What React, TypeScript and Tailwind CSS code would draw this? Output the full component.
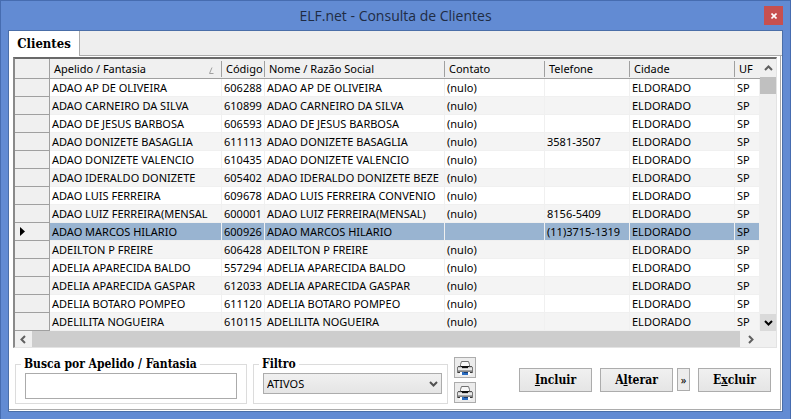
import React from 'react';

type Cliente = {
  apelido: string;
  codigo: string;
  nome: string;
  contato: string;
  telefone: string;
};

const clientes: Cliente[] = [
  { apelido: 'ADAO AP DE OLIVEIRA', codigo: '606288', nome: 'ADAO AP DE OLIVEIRA', contato: '(nulo)', telefone: '' },
  { apelido: 'ADAO CARNEIRO DA SILVA', codigo: '610899', nome: 'ADAO CARNEIRO DA SILVA', contato: '(nulo)', telefone: '' },
  { apelido: 'ADAO DE JESUS BARBOSA', codigo: '606593', nome: 'ADAO DE JESUS BARBOSA', contato: '(nulo)', telefone: '' },
  { apelido: 'ADAO DONIZETE BASAGLIA', codigo: '611113', nome: 'ADAO DONIZETE BASAGLIA', contato: '(nulo)', telefone: '3581-3507' },
  { apelido: 'ADAO DONIZETE VALENCIO', codigo: '610435', nome: 'ADAO DONIZETE VALENCIO', contato: '(nulo)', telefone: '' },
  { apelido: 'ADAO IDERALDO DONIZETE', codigo: '605402', nome: 'ADAO IDERALDO DONIZETE BEZE', contato: '(nulo)', telefone: '' },
  { apelido: 'ADAO LUIS FERREIRA', codigo: '609678', nome: 'ADAO LUIS FERREIRA CONVENIO', contato: '(nulo)', telefone: '' },
  { apelido: 'ADAO LUIZ FERREIRA(MENSAL', codigo: '600001', nome: 'ADAO LUIZ FERREIRA(MENSAL)', contato: '(nulo)', telefone: '8156-5409' },
  { apelido: 'ADAO MARCOS HILARIO', codigo: '600926', nome: 'ADAO MARCOS HILARIO', contato: '', telefone: '(11)3715-1319' },
  { apelido: 'ADEILTON P FREIRE', codigo: '606428', nome: 'ADEILTON P FREIRE', contato: '(nulo)', telefone: '' },
  { apelido: 'ADELIA APARECIDA BALDO', codigo: '557294', nome: 'ADELIA APARECIDA BALDO', contato: '(nulo)', telefone: '' },
  { apelido: 'ADELIA APARECIDA GASPAR', codigo: '612033', nome: 'ADELIA APARECIDA GASPAR', contato: '(nulo)', telefone: '' },
  { apelido: 'ADELIA BOTARO POMPEO', codigo: '611120', nome: 'ADELIA BOTARO POMPEO', contato: '(nulo)', telefone: '' },
  { apelido: 'ADELILITA NOGUEIRA', codigo: '610115', nome: 'ADELILITA NOGUEIRA', contato: '(nulo)', telefone: '' },
];

const SELECIONADO = '600926';

const serif = "font-['DejaVu_Serif_Condensed','DejaVu_Serif',serif] font-bold leading-4";

type Direcao = 'up' | 'down' | 'left' | 'right';

const setas: Record<Direcao, string> = {
  up: 'M1 6 4.5 2.5 8 6',
  down: 'M1 3 4.5 6.5 8 3',
  left: 'M6 1 2.5 4.5 6 8',
  right: 'M3 1 6.5 4.5 3 8',
};

const Seta: React.FC<{ dir: Direcao; className?: string }> = ({ dir, className }) => (
  <svg viewBox="0 0 9 9" className={`h-[9px] w-[9px] ${className ?? ''}`} fill="none" stroke="currentColor" strokeWidth="2">
    <path d={setas[dir]} />
  </svg>
);

const Impressora: React.FC = () => (
  <svg viewBox="0 0 16 16" className="h-4 w-4">
    <path d="M1 6h14l1 1v6H0V7z" fill="#c9c9c9" />
    <path d="M3.5 6.5v-2l1-3h7l1 3v2z" fill="#f7f7f7" stroke="#707070" />
    <path d="M1 6h3v1H1zM12 6h3v1h-3z" fill="#555" />
    <path d="M4 6h8v1h-1v1H5V7H4z" fill="#111" />
    <path d="M0 7h1v6H0zM15 7h1v6h-1z" fill="#777" />
    <path d="M1 8h4v1h6V8h4v2H1z" fill="#e8e8e8" />
    <path d="M1 10h14v1H1z" fill="#a5a5a5" />
    <path d="M1 11h14v1H1z" fill="#858585" />
    <path d="M1 12h14v1H1z" fill="#3a3a3a" />
    <path d="M3 12h10v1l1 2H2l1-2z" fill="#fff" />
    <path d="M5 12h6v3H5z" fill="#2a6cc0" />
    <path d="M7 12h4v1H7z" fill="#153a70" />
  </svg>
);

const Th: React.FC<{ children?: React.ReactNode; last?: boolean }> = ({ children, last }) => (
  <th className="h-5 border-b border-[#a0a0a0] bg-[#f0f0f0] p-0 text-left font-normal">
    <div className={`flex h-4 items-center justify-between pl-1 ${last ? '' : 'border-r border-[#a0a0a0]'}`}>{children}</div>
  </th>
);

const Tabela: React.FC = () => (
  <table className="w-full min-w-0 flex-1 table-fixed border-separate border-spacing-0 text-[11px] leading-4 whitespace-nowrap">
    <colgroup>
      <col className="w-[35px]" />
      <col className="w-[172px]" />
      <col className="w-[43px]" />
      <col />
      <col className="w-[100px]" />
      <col className="w-[85px]" />
      <col className="w-[105px]" />
      <col className="w-[25px]" />
    </colgroup>
    <thead>
      <tr>
        <th className="h-5 border-r border-b border-[#a0a0a0] bg-[#f0f0f0] p-0"></th>
        <Th>
          Apelido / Fantasia
          <svg viewBox="0 0 7 7" className="mt-1 mr-1.5 h-[7px] w-[7px]" fill="none" stroke="#a0a0a0">
            <path d="M4 .5 1.5 6.5h4" />
          </svg>
        </Th>
        <Th>Código</Th>
        <Th>Nome / Razão Social</Th>
        <Th>Contato</Th>
        <Th>Telefone</Th>
        <Th>Cidade</Th>
        <Th last>UF</Th>
      </tr>
    </thead>
    <tbody>
      {clientes.map((c, index) => {
        const ativo = c.codigo === SELECIONADO;
        const fundo = ativo ? 'bg-[#99b4d1]' : index % 2 ? 'bg-[#f4f4f4]' : 'bg-white';
        return (
          <tr key={c.codigo} className={fundo}>
            <td className="h-[18px] border-r border-b border-[#a0a0a0] bg-[#f0f0f0] p-0">
              {ativo && (
                <svg viewBox="0 0 5 9" className="ml-[5px] h-[9px] w-[5px]">
                  <path d="M0 0 5 4.5 0 9z" fill="#000" />
                </svg>
              )}
            </td>
            {[c.apelido, c.codigo, c.nome, c.contato, c.telefone, 'ELDORADO', 'SP'].map((valor, i) => (
              <td key={i} className="h-[18px] overflow-hidden border-r border-b border-[#f0f0f0] p-0 pl-0.5">
                {valor}
              </td>
            ))}
          </tr>
        );
      })}
    </tbody>
  </table>
);

const Botao: React.FC<{ children: React.ReactNode }> = ({ children }) => (
  <button type="button" className={`h-6 w-[73px] border border-[#acacac] bg-linear-to-b from-[#f0f0f0] to-[#e5e5e5] text-[12px] ${serif}`}>
    {children}
  </button>
);

const BotaoImprimir: React.FC<{ label: string }> = ({ label }) => (
  <button
    type="button"
    aria-label={label}
    className="flex h-[21px] w-[22px] items-center justify-center border border-[#acacac] bg-[#ececec]"
  >
    <Impressora />
  </button>
);

export default function App() {
  return (
    <div className="border border-[#466cb0] bg-[#628bd3] px-[7px] pb-[7px] font-['Noto_Sans','Open_Sans',sans-serif] text-black">
      <header className="grid h-[29px] grid-cols-[1fr_auto_1fr] items-center">
        <span></span>
        <h1 className="font-['Open_Sans',sans-serif] text-[14px] leading-5 text-[#1f2c44]">ELF.net - Consulta de Clientes</h1>
        <button
          type="button"
          aria-label="Fechar"
          className="flex h-[19px] w-[19px] items-center justify-center justify-self-end bg-[#c75050]"
        >
          <svg viewBox="0 0 6 6" className="h-[6px] w-[6px]" stroke="#fff" strokeWidth="1.6">
            <path d="M.5 .5 5.5 5.5M5.5 .5 .5 5.5" />
          </svg>
        </button>
      </header>

      <div className="border border-[#4a6ea8] bg-white">
        <nav className="flex h-[25px] bg-[#eeeeee]">
          <button type="button" className={`w-[71px] border-r border-[#acacac] bg-white text-[13px] ${serif}`}>
            Clientes
          </button>
          <span className="flex-1 border-b border-[#acacac]"></span>
        </nav>

        <main className="mr-px mb-px border-r border-b border-[#acacac] pt-px pr-[3px] pb-[5px] pl-1">
          <section className="border-t-2 border-l-2 border-r border-b border-t-[#696969] border-l-[#8a8a8a] border-r-[#e3e3e3] border-b-[#e3e3e3]">
            <div className="flex">
              <Tabela />
              <div className="flex w-4 shrink-0 flex-col bg-[#f0f0f0]">
                <button type="button" aria-label="Rolar para cima" className="flex h-[18px] items-center justify-center text-[#606060]">
                  <Seta dir="up" />
                </button>
                <span className="h-[17px] bg-[#c0c0c0]"></span>
                <button
                  type="button"
                  aria-label="Rolar para baixo"
                  className="mt-auto flex h-[17px] items-center justify-center bg-[#dadada]"
                >
                  <Seta dir="down" />
                </button>
              </div>
            </div>
            <div className="flex h-4 bg-[#f0f0f0] pr-4 text-[#606060]">
              <button type="button" aria-label="Rolar para a esquerda" className="flex w-[17px] items-center justify-center">
                <Seta dir="left" />
              </button>
              <span className="flex-1 bg-[#cdcdcd]"></span>
              <button type="button" aria-label="Rolar para a direita" className="flex w-5 items-center justify-center">
                <Seta dir="right" />
              </button>
            </div>
          </section>

          <form className="flex items-start gap-1.5 pt-2 pr-1.5 pl-0.5">
            <fieldset className="h-[48px] w-[232px] border border-[#dcdcdc] px-[9px]">
              <legend className={`-ml-1 px-[3px] text-[12px] ${serif}`}>
                <label htmlFor="busca">Busca por Apelido / Fantasia</label>
              </legend>
              <input id="busca" type="text" className="mt-px block h-[26px] w-full border border-[#ababab] bg-white px-1 text-[11px] outline-none" />
            </fieldset>
            <fieldset className="h-[48px] w-[195px] border border-[#dcdcdc] pr-[5px] pl-[9px]">
              <legend className={`-ml-1 px-[3px] text-[12px] ${serif}`}>
                <label htmlFor="filtro">Filtro</label>
              </legend>
              <div className="relative mt-px">
                <select
                  id="filtro"
                  className="block h-[21px] w-full appearance-none border border-[#acacac] bg-linear-to-b from-[#f0f0f0] to-[#e5e5e5] px-[3px] text-[11px] leading-4"
                >
                  <option>ATIVOS</option>
                </select>
                <Seta dir="down" className="pointer-events-none absolute top-1.5 right-1 text-[#505050]" />
              </div>
            </fieldset>
            <div className="flex flex-col gap-1 pt-px">
              <BotaoImprimir label="Imprimir lista" />
              <BotaoImprimir label="Imprimir ficha" />
            </div>
            <div className="ml-auto flex gap-2 pt-3">
              <Botao>
                <u>I</u>ncluir
              </Botao>
              <div className="flex gap-1">
                <Botao>
                  A<u>l</u>terar
                </Botao>
                <button
                  type="button"
                  aria-label="Mais opções"
                  className="h-[23px] w-[13px] border border-[#acacac] bg-[#ececec] text-[11px] leading-4"
                >
                  »
                </button>
              </div>
              <Botao>
                E<u>x</u>cluir
              </Botao>
            </div>
          </form>
        </main>
      </div>
    </div>
  );
}
